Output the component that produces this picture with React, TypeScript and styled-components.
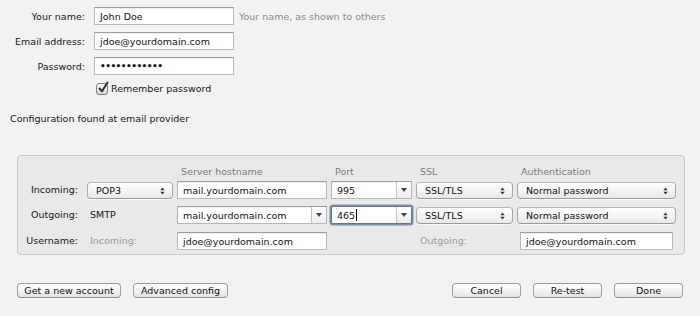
import React from 'react';
import styled, { createGlobalStyle, css } from 'styled-components';

const Global = createGlobalStyle`
  html, body { margin: 0; padding: 0; background: #f2f2f2; }
  body {
    font-family: "DejaVu Sans", "Lucida Grande", sans-serif;
    font-size: 9.5px;
    color: #161616;
  }
  * { box-sizing: border-box; }
`;

const Window = styled.div`
  width: 700px;
  height: 316px;
  background: #f2f2f2;
  padding-top: 7px;
  display: flex;
  flex-direction: column;
  overflow: hidden;
`;

const IdentityGrid = styled.div`
  display: grid;
  grid-template-columns: 94px 140px auto;
  grid-template-rows: 18px 18px 18px 13px;
  row-gap: 7px;
  align-items: center;
`;

const FieldLabel = styled.div`
  text-align: right;
  padding-right: 9px;
  white-space: nowrap;
`;

const fieldBase = css`
  height: 18px;
  background: #fff;
  border: 1px solid #b9b9b9;
  border-top-color: #9c9c9c;
  box-shadow: inset 0 1px 1px rgba(0, 0, 0, 0.07);
  display: flex;
  align-items: center;
  padding: 0 5px;
  color: #111;
  white-space: nowrap;
  overflow: hidden;
`;

const TextField = styled.div<{ $inset?: number }>`
  ${fieldBase};
  margin: 0 ${(p) => p.$inset ?? 0}px;
`;

const Dots = styled.span`
  font-size: 9px;
  font-weight: bold;
  letter-spacing: -0.55px;
  color: #111;
`;

const Hint = styled.div`
  padding-left: 5px;
  color: #8c8c8c;
  white-space: nowrap;
`;

const CheckRow = styled.label`
  grid-column: 2 / span 2;
  display: flex;
  align-items: center;
  gap: 3px;
  padding-left: 2px;
  height: 13px;
`;

const CheckBox = styled.span`
  width: 12px;
  height: 12px;
  border: 1px solid #7e7e7e;
  border-radius: 3px;
  background: linear-gradient(#ffffff, #d6d6d6);
  position: relative;
  flex: none;
`;

const CheckMark = styled.svg`
  position: absolute;
  left: 0px;
  top: -3px;
`;

const StatusText = styled.div`
  margin: 17px 0 0 10px;
  line-height: 14px;
`;

const Panel = styled.div`
  margin: 29px 0 0 17px;
  width: 668px;
  border: 1px solid #c9c9c9;
  border-radius: 4px;
  background: #e9e9e9;
  padding: 5px 0 4px 0;
  display: grid;
  grid-template-columns: 65px 86px 150px 81px 97px 159px;
  grid-template-rows: 20px 25px 26px 18px;
  column-gap: 4px;
  align-items: start;
`;

const HeadSpacer = styled.div`
  grid-column: 1 / span 2;
  grid-row: 1;
`;

const ColHead = styled.div<{ $col: number }>`
  grid-column: ${(p) => p.$col};
  grid-row: 1;
  align-self: center;
  padding-left: 4px;
  color: #7b7b7b;
  white-space: nowrap;
`;

const RowLabel = styled.div`
  grid-column: 1;
  height: 18px;
  line-height: 18px;
  text-align: right;
  padding-right: 5px;
  white-space: nowrap;
`;

const PlainCell = styled.div<{ $muted?: boolean; $pad?: number }>`
  height: 18px;
  line-height: 18px;
  padding-left: ${(p) => p.$pad ?? 3}px;
  color: ${(p) => (p.$muted ? '#9a9a9a' : '#161616')};
  white-space: nowrap;
`;

const Popup = styled.div`
  height: 17px;
  margin-top: 1px;
  border: 1px solid #a9a9a9;
  border-top-color: #b4b4b4;
  border-bottom-color: #9a9a9a;
  border-radius: 4px;
  background: linear-gradient(#ffffff, #f4f4f4 50%, #e8e8e8);
  box-shadow: 0 1px 0 rgba(255, 255, 255, 0.7);
  display: flex;
  align-items: center;
  justify-content: space-between;
  padding: 0 7px 0 8px;
  color: #111;
  white-space: nowrap;
`;

const Combo = styled.div<{ $focused?: boolean }>`
  height: 18px;
  display: flex;
  background: #fff;
  border: 1px solid #b5b5b5;
  border-top-color: #9c9c9c;
  box-shadow: inset 0 1px 1px rgba(0, 0, 0, 0.07);
  ${(p) =>
    p.$focused &&
    css`
      border-color: #65758c;
      border-radius: 2px;
      box-shadow: 0 0 0 1.5px #7e8da3;
    `}
`;

const ComboText = styled.div`
  flex: 1;
  display: flex;
  align-items: center;
  padding: 0 5px;
  color: #111;
  white-space: nowrap;
  overflow: hidden;
`;

const Caret = styled.span`
  display: inline-block;
  width: 1px;
  height: 12px;
  background: #000;
  margin-left: 1px;
`;

const ComboArrow = styled.div`
  width: 15px;
  border-left: 1px solid #c4c4c4;
  background: linear-gradient(#ffffff, #ececec);
  display: flex;
  align-items: center;
  justify-content: center;
`;

const ButtonBar = styled.div`
  margin-top: 28px;
  padding: 0 17px;
  display: flex;
  justify-content: space-between;
`;

const ButtonGroup = styled.div`
  display: flex;
  gap: 12px;
`;

const PushButton = styled.button<{ $w: number }>`
  width: ${(p) => p.$w}px;
  height: 15px;
  padding: 0;
  border: 1px solid #9d9d9d;
  border-bottom-color: #8c8c8c;
  border-radius: 4px;
  background: linear-gradient(#ffffff, #f3f3f3 50%, #e3e3e3);
  box-shadow: 0 1px 0 rgba(255, 255, 255, 0.7);
  font-family: inherit;
  font-size: 9.5px;
  color: #111;
  line-height: 13px;
  text-align: center;
`;

const UpDown = () => (
  <svg width="5" height="8" viewBox="0 0 5 8">
    <path d="M0.3 3.2 L2.5 0.4 L4.7 3.2 Z M0.3 4.8 L2.5 7.6 L4.7 4.8 Z" fill="#3a3a3a" />
  </svg>
);

const Down = () => (
  <svg width="6" height="4" viewBox="0 0 6 4">
    <path d="M0 0 L6 0 L3 4 Z" fill="#444" />
  </svg>
);

const Select = ({ value }: { value: string }) => (
  <Popup>
    <span>{value}</span>
    <UpDown />
  </Popup>
);

export default function App() {
  return (
    <>
      <Global />
      <Window>
        <IdentityGrid>
          <FieldLabel>Your name:</FieldLabel>
          <TextField>John Doe</TextField>
          <Hint>Your name, as shown to others</Hint>

          <FieldLabel>Email address:</FieldLabel>
          <TextField>jdoe@yourdomain.com</TextField>
          <span />

          <FieldLabel>Password:</FieldLabel>
          <TextField>
            <Dots>••••••••••••</Dots>
          </TextField>
          <span />

          <span />
          <CheckRow>
            <CheckBox>
              <CheckMark width="12" height="13" viewBox="0 0 12 13">
                <path d="M2.5 7.5 L5 10.3 L10.5 1.5" fill="none" stroke="#2e2e2e" strokeWidth="2" strokeLinecap="round" strokeLinejoin="round" />
              </CheckMark>
            </CheckBox>
            Remember password
          </CheckRow>
        </IdentityGrid>

        <StatusText>Configuration found at email provider</StatusText>

        <Panel>
          <HeadSpacer />
          <ColHead $col={3}>Server hostname</ColHead>
          <ColHead $col={4}>Port</ColHead>
          <ColHead $col={5}>SSL</ColHead>
          <ColHead $col={6}>Authentication</ColHead>

          <RowLabel>Incoming:</RowLabel>
          <Select value="POP3" />
          <TextField>mail.yourdomain.com</TextField>
          <Combo>
            <ComboText>995</ComboText>
            <ComboArrow><Down /></ComboArrow>
          </Combo>
          <Select value="SSL/TLS" />
          <Select value="Normal password" />

          <RowLabel>Outgoing:</RowLabel>
          <PlainCell>SMTP</PlainCell>
          <Combo>
            <ComboText>mail.yourdomain.com</ComboText>
            <ComboArrow><Down /></ComboArrow>
          </Combo>
          <Combo $focused>
            <ComboText>465<Caret /></ComboText>
            <ComboArrow><Down /></ComboArrow>
          </Combo>
          <Select value="SSL/TLS" />
          <Select value="Normal password" />

          <RowLabel>Username:</RowLabel>
          <PlainCell $muted>Incoming:</PlainCell>
          <TextField>jdoe@yourdomain.com</TextField>
          <span />
          <PlainCell $muted $pad={4}>Outgoing:</PlainCell>
          <TextField $inset={3}>jdoe@yourdomain.com</TextField>
        </Panel>

        <ButtonBar>
          <ButtonGroup>
            <PushButton $w={104}>Get a new account</PushButton>
            <PushButton $w={95}>Advanced config</PushButton>
          </ButtonGroup>
          <ButtonGroup>
            <PushButton $w={69}>Cancel</PushButton>
            <PushButton $w={69}>Re-test</PushButton>
            <PushButton $w={69}>Done</PushButton>
          </ButtonGroup>
        </ButtonBar>
      </Window>
    </>
  );
}
